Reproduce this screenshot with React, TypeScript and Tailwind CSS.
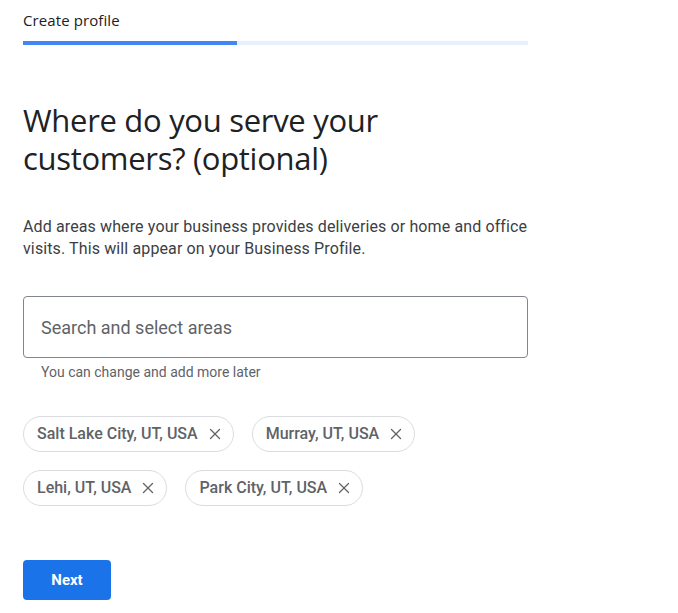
import { X } from "lucide-react";

const areas = [
  ["Salt Lake City, UT, USA", "Murray, UT, USA"],
  ["Lehi, UT, USA", "Park City, UT, USA"],
];

function AreaChip({ label }: { label: string }) {
  return (
    <div className="flex h-9 items-center gap-[8px] rounded-full border border-[#dadce0] pl-[13px] pr-[9px] text-[16px] font-medium text-[#5f6368]">
      <span>{label}</span>
      <X size={18} strokeWidth={1.7} className="text-[#5f6368]" />
    </div>
  );
}

export default function App() {
  return (
    <div
      className="min-h-screen bg-white px-[23px] pt-[10px] text-[#202124]"
      style={{ fontFamily: "Roboto, Arial, sans-serif" }}
    >
      <div className="w-[505px]">
        <div className="text-[15px] leading-[20px] font-['Open_Sans',sans-serif] tracking-[0.1px]">
          Create profile
        </div>
        <div className="mt-[11px] flex h-1">
          <div className="w-[214px] bg-[#4285f4]" />
          <div className="flex-1 bg-[#e8f0fe]" />
        </div>

        <h1 className="mt-[56px] text-[31px] leading-[38px] font-['Open_Sans',sans-serif] tracking-[-0.3px]">
          Where do you serve your
          <br />
          customers? (optional)
        </h1>

        <p className="mt-[39px] text-[16px] leading-[22px] tracking-[0.12px] text-[#3c4043]">
          Add areas where your business provides deliveries or home and office
          visits. This will appear on your Business Profile.
        </p>

        <div className="mt-[36px] flex h-[62px] items-center rounded-[4px] border border-[#80868b] px-[17px] text-[18px] text-[#5f6368]">
          Search and select areas
        </div>
        <div className="mt-[5px] pl-[18px] text-[14px] leading-[18px] text-[#5f6368]">
          You can change and add more later
        </div>

        <div className="mt-[35px] flex flex-col gap-[18px]">
          {areas.map((row, i) => (
            <div key={i} className="flex gap-[18px]">
              {row.map((a) => (
                <AreaChip key={a} label={a} />
              ))}
            </div>
          ))}
        </div>

        <button className="mt-[54px] flex h-10 w-[88px] items-center justify-center rounded-[4px] bg-[#1a73e8] text-[15px] font-bold text-white">
          Next
        </button>
      </div>
    </div>
  );
}
